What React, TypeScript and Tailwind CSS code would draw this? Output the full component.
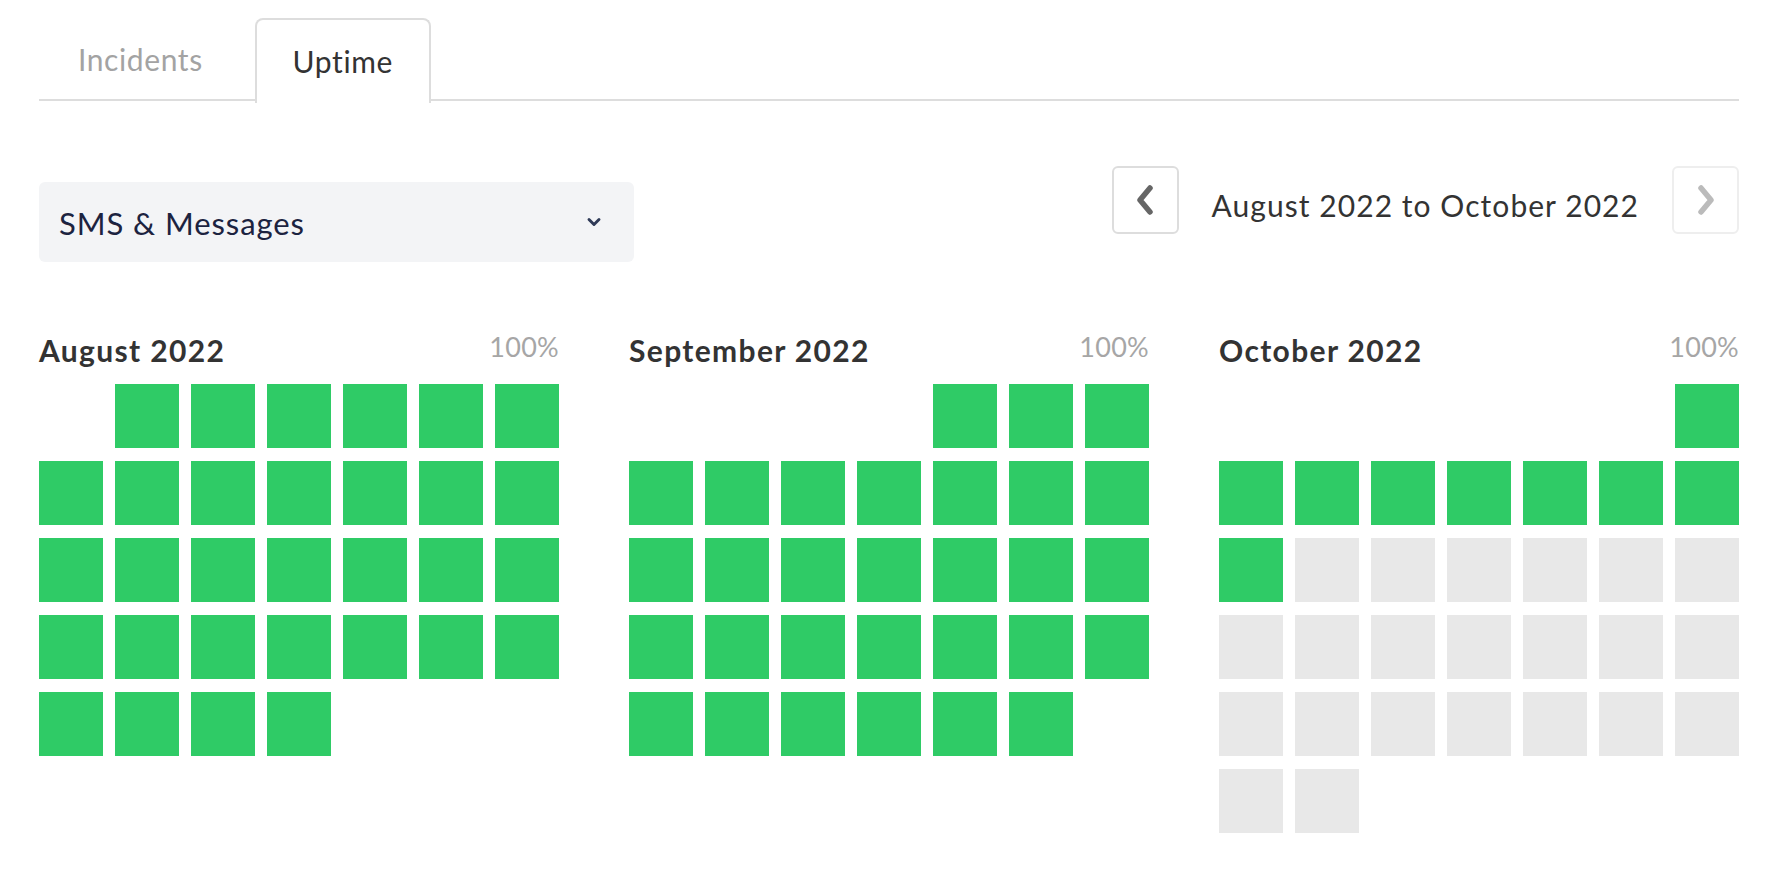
import React from 'react';
import { ChevronDown } from 'lucide-react';

type Day = 'up' | 'none' | null;

const months: { name: string; offset: number; days: number; upTo: number }[] = [
  { name: 'August 2022', offset: 1, days: 31, upTo: 31 },
  { name: 'September 2022', offset: 4, days: 30, upTo: 30 },
  { name: 'October 2022', offset: 6, days: 31, upTo: 9 },
];

function buildCells(offset: number, days: number, upTo: number): Day[] {
  const cells: Day[] = [];
  for (let i = 0; i < offset; i++) cells.push(null);
  for (let d = 1; d <= days; d++) cells.push(d <= upTo ? 'up' : 'none');
  return cells;
}

function Chevron({ dir, color }: { dir: 'left' | 'right'; color: string }) {
  return (
    <svg width="20" height="30" viewBox="0 0 20 30" fill="none">
      <polyline
        points={dir === 'left' ? '15,3 5,15 15,27' : '5,3 15,15 5,27'}
        stroke={color}
        strokeWidth="5.5"
        strokeLinecap="round"
        strokeLinejoin="round"
      />
    </svg>
  );
}

function MonthCalendar({ name, offset, days, upTo }: { name: string; offset: number; days: number; upTo: number }) {
  const cells = buildCells(offset, days, upTo);
  return (
    <div>
      <div className="flex justify-between items-start h-[36px]">
        <h4 className="text-[30px] leading-[36px] font-bold text-[#333333] tracking-[0.045em]">{name}</h4>
        <span className="text-[27px] leading-[30px] text-[#a6a6a6] tracking-[0.01em]">100%</span>
      </div>
      <div className="grid grid-cols-7 gap-x-[12px] gap-y-[13px] mt-[16px]">
        {cells.map((c, i) =>
          c === null ? (
            <div key={i} className="h-[64px]" />
          ) : (
            <div key={i} className={c === 'up' ? 'h-[64px] bg-[#2fcb66]' : 'h-[64px] bg-[#e8e8e8]'} />
          )
        )}
      </div>
    </div>
  );
}

export default function App() {
  return (
    <div className="min-h-screen bg-white font-['Lato',sans-serif] pl-[39px] pt-[18px]">
      <div className="w-[1700px]">
        {/* Tabs */}
        <div className="flex border-b-2 border-[#dddddd] h-[83px]">
          <button className="pl-[39px] pr-[52px] text-[30px] text-[#a3a3a3] tracking-[0.02em] pt-[2px]">Incidents</button>
          <button className="w-[176px] text-[30px] text-[#333333] tracking-[0.02em] bg-white border-2 border-b-0 border-[#dddddd] rounded-t-[8px] -mb-[2px] h-[85px]">
            Uptime
          </button>
        </div>

        {/* Filter row */}
        <div className="flex justify-between items-start mt-[65px]">
          <div className="mt-[16px] w-[595px] h-[80px] bg-[#f3f4f6] rounded-[6px] flex items-center justify-between pl-[20px] pr-[30px]">
            <span className="text-[31px] text-[#1c2340] tracking-[0.03em] mt-[2px]">SMS &amp; Messages</span>
            <ChevronDown size={20} strokeWidth={3.5} className="text-[#2f3a57]" />
          </div>
          <div className="flex items-center gap-[33px]">
            <button className="w-[67px] h-[68px] border-2 border-[#dddddd] rounded-[6px] flex items-center justify-center">
              <Chevron dir="left" color="#666666" />
            </button>
            <span className="text-[30px] text-[#333333] tracking-[0.035em] pt-[10px]">August 2022 to October 2022</span>
            <button className="w-[67px] h-[68px] border-2 border-[#eeeeee] rounded-[6px] flex items-center justify-center">
              <Chevron dir="right" color="#bbbbbb" />
            </button>
          </div>
        </div>

        {/* Months */}
        <div className="grid grid-cols-3 gap-x-[70px] mt-[70px]">
          {months.map((m) => (
            <MonthCalendar key={m.name} {...m} />
          ))}
        </div>
      </div>
    </div>
  );
}
